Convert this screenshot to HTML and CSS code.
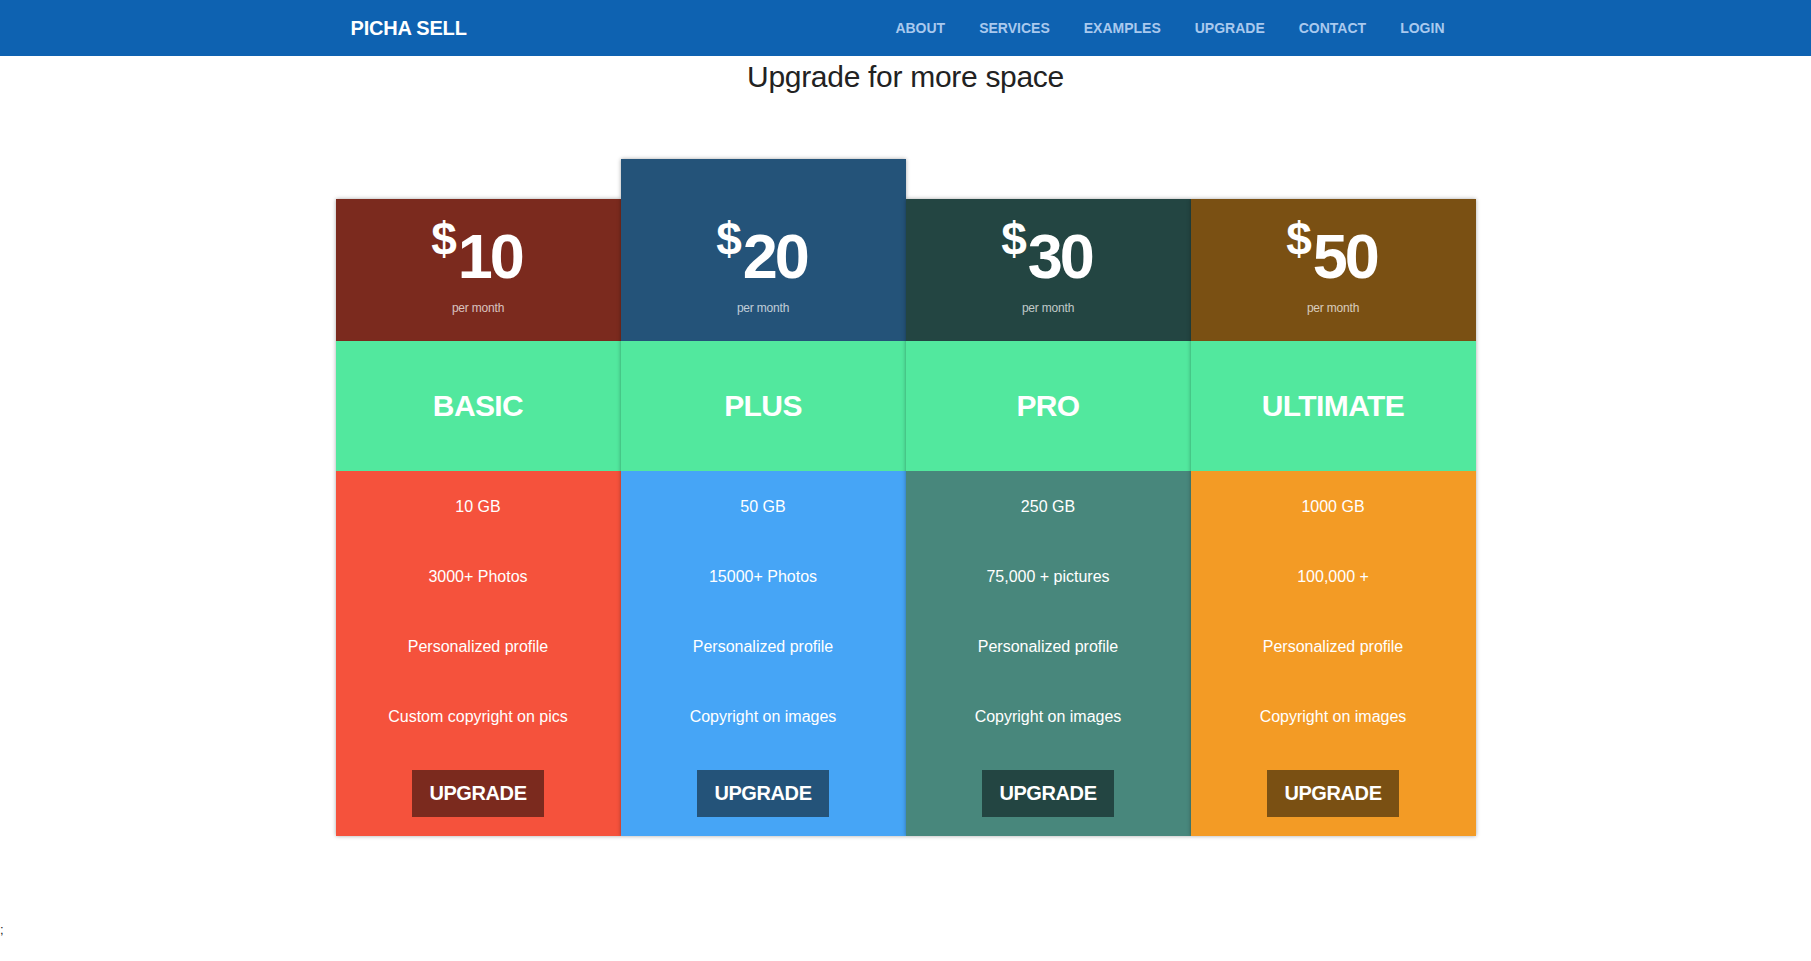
FILE: index.html
```html
<!DOCTYPE html>
<html lang="en">
<head>
<meta charset="utf-8">
<title>Picha Sell - Upgrade</title>
<link rel="stylesheet" href="styles.css">
</head>
<body>
<nav class="navbar">
  <div class="container nav-inner">
    <a class="brand" href="#">PICHA SELL</a>
    <ul class="nav-links">
      <li><a href="#">ABOUT</a></li>
      <li><a href="#">SERVICES</a></li>
      <li><a href="#">EXAMPLES</a></li>
      <li><a href="#">UPGRADE</a></li>
      <li><a href="#">CONTACT</a></li>
      <li><a href="#">LOGIN</a></li>
    </ul>
  </div>
</nav>

<h2 class="page-title">Upgrade for more space</h2>

<div class="pricing">
  <div class="plan basic">
    <div class="plan-head">
      <div class="price"><span class="cur">$</span><span class="amt">10</span></div>
      <div class="per">per month</div>
    </div>
    <div class="plan-name">BASIC</div>
    <div class="plan-body">
      <ul class="features">
        <li>10 GB</li>
        <li>3000+ Photos</li>
        <li>Personalized profile</li>
        <li>Custom copyright on pics</li>
      </ul>
      <a class="btn" href="#">UPGRADE</a>
    </div>
  </div>

  <div class="plan plus featured">
    <div class="plan-head">
      <div class="price"><span class="cur">$</span><span class="amt">20</span></div>
      <div class="per">per month</div>
    </div>
    <div class="plan-name">PLUS</div>
    <div class="plan-body">
      <ul class="features">
        <li>50 GB</li>
        <li>15000+ Photos</li>
        <li>Personalized profile</li>
        <li>Copyright on images</li>
      </ul>
      <a class="btn" href="#">UPGRADE</a>
    </div>
  </div>

  <div class="plan pro">
    <div class="plan-head">
      <div class="price"><span class="cur">$</span><span class="amt">30</span></div>
      <div class="per">per month</div>
    </div>
    <div class="plan-name">PRO</div>
    <div class="plan-body">
      <ul class="features">
        <li>250 GB</li>
        <li>75,000 + pictures</li>
        <li>Personalized profile</li>
        <li>Copyright on images</li>
      </ul>
      <a class="btn" href="#">UPGRADE</a>
    </div>
  </div>

  <div class="plan ultimate">
    <div class="plan-head">
      <div class="price"><span class="cur">$</span><span class="amt">50</span></div>
      <div class="per">per month</div>
    </div>
    <div class="plan-name">ULTIMATE</div>
    <div class="plan-body">
      <ul class="features">
        <li>1000 GB</li>
        <li>100,000 +</li>
        <li>Personalized profile</li>
        <li>Copyright on images</li>
      </ul>
      <a class="btn" href="#">UPGRADE</a>
    </div>
  </div>
</div>

<p class="stray">;</p>
</body>
</html>
```

FILE: styles.css
```css
* {
  box-sizing: border-box;
}

html, body {
  margin: 0;
  padding: 0;
  background: #ffffff;
}

body {
  font-family: "Liberation Sans", Arial, Helvetica, sans-serif;
  color: #222;
}

.container {
  width: 1170px;
  margin: 0 auto;
  padding: 0 15px;
}

/* Navbar */
.navbar {
  background: #0e62b1;
  height: 56px;
}

.nav-inner {
  height: 56px;
  display: flex;
  align-items: center;
  justify-content: space-between;
}

.brand {
  padding: 0 15px;
  color: #ffffff;
  font-size: 20px;
  font-weight: 700;
  letter-spacing: -0.2px;
  text-decoration: none;
}

.nav-links {
  list-style: none;
  margin: 0 15px 0 0;
  padding: 0;
  display: flex;
}

.nav-links a {
  display: block;
  padding: 0 16px 0 18px;
  color: #a9c9ee;
  font-size: 14px;
  font-weight: 700;
  letter-spacing: 0;
  text-decoration: none;
  line-height: 56px;
}

/* Title */
.page-title {
  margin: 4px 0 0;
  text-align: center;
  font-size: 30px;
  line-height: 33px;
  font-weight: 400;
  color: #222;
  letter-spacing: -0.3px;
}

/* Pricing */
.pricing {
  width: 1140px;
  margin: 66px auto 0;
  display: flex;
  align-items: flex-end;
}

.plan {
  flex: 1 1 0;
  text-align: center;
  color: #ffffff;
  box-shadow: 0 0 4px rgba(0, 0, 0, 0.35);
}

.plan-head {
  height: 142px;
  padding-top: 26px;
}

.featured .plan-head {
  height: 182px;
  padding-top: 66px;
}

.price {
  display: flex;
  justify-content: center;
  align-items: flex-start;
  font-weight: 700;
}

.cur {
  font-size: 46px;
  line-height: 45px;
  margin-top: -8px;
  margin-right: 1px;
}

.amt {
  font-size: 63px;
  line-height: 63px;
  letter-spacing: -3px;
  margin-right: 3px;
}

.per {
  margin-top: 12px;
  font-size: 12px;
  line-height: 16px;
  color: rgba(255, 255, 255, 0.72);
  letter-spacing: -0.2px;
}

.plan-name {
  height: 130px;
  display: flex;
  align-items: center;
  justify-content: center;
  background: #52e89e;
  font-size: 30px;
  font-weight: 700;
  letter-spacing: -0.6px;
}

.plan-body {
  padding-bottom: 19px;
}

.features {
  list-style: none;
  margin: 0;
  padding: 0;
}

.features li {
  height: 70px;
  line-height: 72px;
  font-size: 16px;
  letter-spacing: 0;
}

.btn {
  display: inline-block;
  margin-top: 19px;
  width: 132px;
  height: 47px;
  line-height: 47px;
  font-size: 20px;
  font-weight: 700;
  color: #ffffff;
  text-decoration: none;
  letter-spacing: -0.4px;
}

.basic .plan-head, .basic .btn { background: #7b2a1e; }
.basic .plan-body { background: #f5523c; }

.plus .plan-head, .plus .btn { background: #245379; }
.plus .plan-body { background: #46a5f6; }

.pro .plan-head, .pro .btn { background: #234542; }
.pro .plan-body { background: #48877c; }

.ultimate .plan-head, .ultimate .btn { background: #7a5013; }
.ultimate .plan-body { background: #f39b25; }

.stray {
  margin: 84px 0 0;
  font-size: 13px;
  line-height: 20px;
  color: #222;
}
```
